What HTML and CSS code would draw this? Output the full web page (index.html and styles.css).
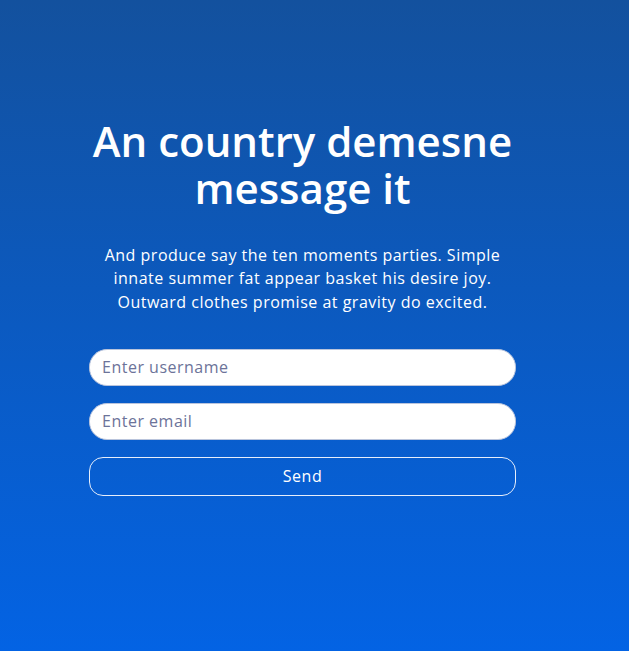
FILE: index.html
```html
<!DOCTYPE html>
<html lang="en">
<head>
<meta charset="utf-8">
<title>Subscribe</title>
<link rel="stylesheet" href="styles.css">
</head>
<body>
<main class="page">
  <section class="panel">
    <h1 class="title">An country demesne message it</h1>
    <p class="lead">And produce say the ten moments parties. Simple innate summer fat appear basket his desire joy. Outward clothes promise at gravity do excited.</p>
    <form class="form">
      <input class="field" type="text" placeholder="Enter username">
      <input class="field" type="email" placeholder="Enter email">
      <button class="send" type="button">Send</button>
    </form>
  </section>
</main>
</body>
</html>
```
FILE: styles.css
```css
* { box-sizing: border-box; }
html, body { margin: 0; padding: 0; }
body {
  min-height: 651px;
  background: linear-gradient(180deg, #13519e 0%, #0363e4 100%);
  font-family: "Open Sans", "Noto Sans", sans-serif;
  color: #fff;
}
.page {
  padding: 117px 0 0 89px;
}
.panel {
  width: 427px;
  text-align: center;
}
.title {
  margin: 0 0 33px;
  font-size: 42px;
  line-height: 47px;
  font-weight: 600;
  letter-spacing: 0;
}
.lead {
  margin: 0 0 35px;
  font-size: 16px;
  line-height: 23.3px;
  font-weight: 400;
  letter-spacing: 0.5px;
}
.form {
  display: flex;
  flex-direction: column;
  gap: 17px;
}
.field {
  height: 37px;
  border: 1px solid #b9c4dc;
  border-radius: 18px;
  background: #fff;
  padding: 0 12px;
  font-family: inherit;
  font-size: 16px;
  letter-spacing: 0.5px;
  color: #333;
  outline: none;
}
.field::placeholder { color: #6c7399; }
.send {
  height: 39px;
  border: 1px solid #e6eefb;
  border-radius: 14px;
  background: transparent;
  color: #fff;
  font-family: inherit;
  font-size: 16px;
  letter-spacing: 0.5px;
}
```
